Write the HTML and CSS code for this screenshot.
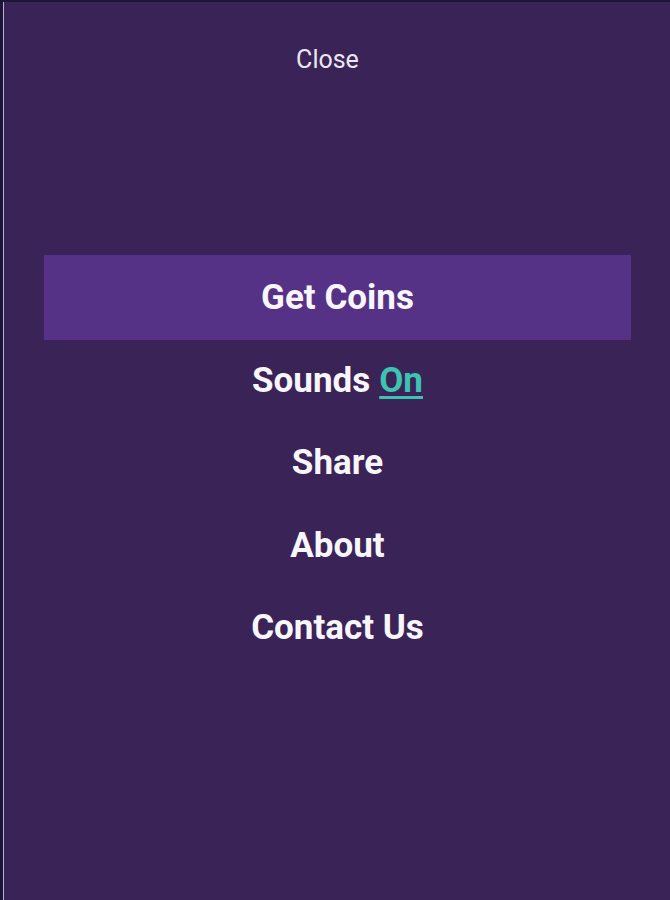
FILE: index.html
```html
<!DOCTYPE html>
<html>
<head>
<meta charset="utf-8">
<link rel="stylesheet" href="styles.css">
</head>
<body>
<div class="screen">
  <div class="close">Close</div>
  <ul class="menu">
    <li class="item active">Get Coins</li>
    <li class="item">Sounds <span class="on">On</span></li>
    <li class="item">Share</li>
    <li class="item">About</li>
    <li class="item">Contact Us</li>
  </ul>
</div>
</body>
</html>
```
FILE: styles.css
```css
html, body {
  margin: 0;
  padding: 0;
  width: 670px;
  height: 900px;
  background: #3a2357;
  font-family: Roboto, "Liberation Sans", sans-serif;
}
.screen {
  box-sizing: border-box;
  width: 670px;
  height: 900px;
  background: #3a2357;
  border-top: 2px solid #1e1638;
  border-left: 3px solid #1e1638;
  box-shadow: inset 1px 0 0 #b9b4c4;
  padding: 0 39px 0 41px;
  display: flex;
  flex-direction: column;
}
.close {
  margin-top: 44px;
  text-align: center;
  color: #ebe6f2;
  font-size: 25px;
  line-height: 28px;
  padding-right: 20px;
}
.menu {
  list-style: none;
  margin: 181px 0 0 0;
  padding: 0;
}
.item {
  height: 82.5px;
  display: flex;
  align-items: center;
  justify-content: center;
  color: #f8f5fb;
  font-weight: 700;
  font-size: 35px;
}
.item.active {
  background: #553285;
  height: 85px;
  margin-bottom: -1px;
}
.on {
  color: #3ec3b3;
  text-decoration: underline;
  text-decoration-thickness: 3px;
  text-underline-offset: 4px;
  margin-left: 9px;
}
```
